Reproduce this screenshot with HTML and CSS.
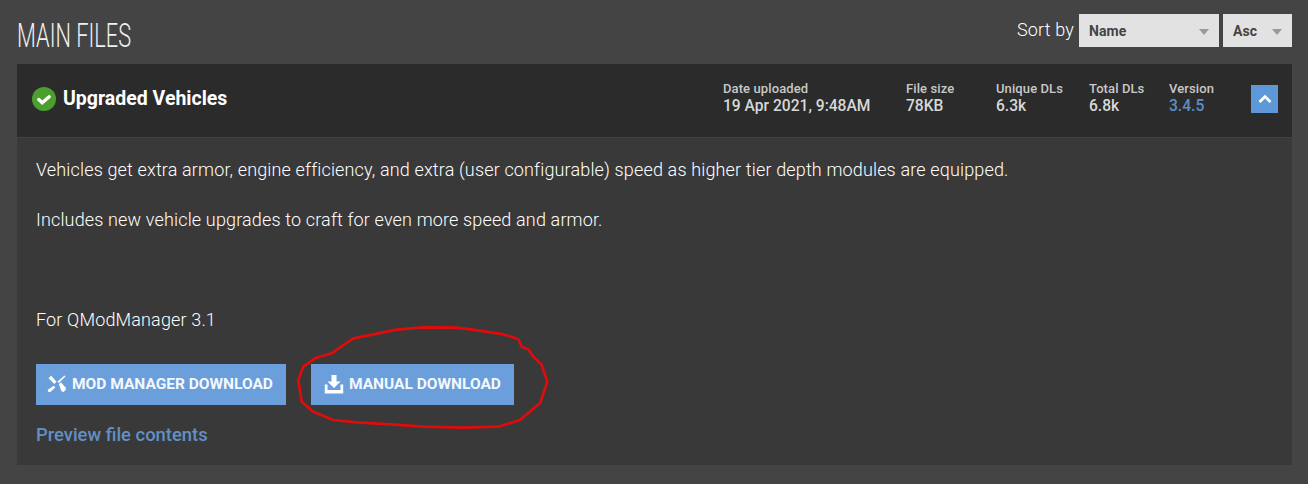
FILE: index.html
```html
<!DOCTYPE html>
<html lang="en">
<head>
    <meta charset="UTF-8">
    <meta name="viewport" content="width=device-width, initial-scale=1.0">
    <title>Main files</title>

    <link rel="stylesheet" href="styles.css">
</head>
<body>
    <div class="files_head">
        <h2 class="files_title">MAIN FILES</h2>
        <div class="sort">
            <span class="sort_label">Sort by</span>
            <div class="select select_name">Name<span class="arrow"></span></div>
            <div class="select select_order">Asc<span class="arrow"></span></div>
        </div>
    </div>

    <div class="file">
        <div class="file_header">
            <div class="file_name">
                <svg class="check" viewBox="0 0 24 24">
                    <circle cx="12" cy="12" r="12" fill="#4a9f2f"/>
                    <path d="M6.800 12.600l3.400 3.200 7-6" fill="none" stroke="#fff" stroke-width="3.400" stroke-linecap="round"/>
                </svg>
                <span>Upgraded Vehicles</span>
            </div>
            <div class="stats">
                <div class="stat stat_date"><span class="stat_label">Date uploaded</span><span class="stat_value">19 Apr 2021, 9:48AM</span></div>
                <div class="stat stat_size"><span class="stat_label">File size</span><span class="stat_value">78KB</span></div>
                <div class="stat stat_unique"><span class="stat_label">Unique DLs</span><span class="stat_value">6.3k</span></div>
                <div class="stat stat_total"><span class="stat_label">Total DLs</span><span class="stat_value">6.8k</span></div>
                <div class="stat stat_version"><span class="stat_label">Version</span><span class="stat_value version">3.4.5</span></div>
            </div>
            <div class="collapse">
                <svg viewBox="0 0 14 10" width="14" height="10">
                    <path d="M1.500 8L7 2.600 12.500 8" fill="none" stroke="#fff" stroke-width="2.800"/>
                </svg>
            </div>
        </div>

        <div class="file_body">
            <p class="desc">Vehicles get extra armor, engine efficiency, and extra (user configurable) speed as higher tier depth modules are equipped.</p>
            <p class="desc">Includes new vehicle upgrades to craft for even more speed and armor.</p>
            <p class="desc desc_last">For QModManager 3.1</p>

            <div class="actions">
                <a class="btn btn_mod">
                    <svg viewBox="0 0 20 18" width="20" height="18">
                        <path d="M1.500 3.500L4 .5l5.500 6.300-2.300 2.200-4-4.200z" fill="#fff"/>
                        <path d="M17.500 .5l1 1-6.800 6.600-1.300-1.300z" fill="#fff"/>
                        <path d="M11.800 9.300l2-2 5.200 5.700-.3 1.700-2.200 2.300-2-.8z" fill="#fff"/>
                        <path d="M6.800 10.700l1.600 1.500-5 4.800-2.400-.2-.2-2z" fill="#fff"/>
                    </svg>
                    MOD MANAGER DOWNLOAD
                </a>
                <a class="btn btn_manual">
                    <svg viewBox="0 0 20 20" width="20" height="20">
                        <path d="M7.500 1h5v6.500h4L10 14 3.500 7.500h4z" fill="#fff"/>
                        <path d="M.8 10.500h2.700v5.500h13v-5.500h2.700V19.500H.8z" fill="#fff"/>
                    </svg>
                    MANUAL DOWNLOAD
                </a>
            </div>
            <a class="preview">Preview file contents</a>

            <svg class="scribble" viewBox="0 0 840 375">
                <path d="M685 72L640 58 570 47 500 38 400 37 320 44 250 58 190 70 160 90 125 115 75 130 40 155 25 195 35 260 70 290 130 315 200 322 300 328 400 335 520 338 625 335 690 315 750 265 772 200 755 150 730 125 715 103 695 95 685 72" fill="none" stroke="#e00c0c" stroke-width="8" stroke-linejoin="round"/>
            </svg>
        </div>
    </div>
</body>
</html>
```

FILE: styles.css
```css
body
{
    margin: 0px;
    height: 484px;
    padding: 14px 16px 0 17px;
    box-sizing: border-box;
    overflow: hidden;
    background-color: #444444;
    color: #eaeaea;
    font-family: Roboto, "Liberation Sans", sans-serif;
}

.files_head
{
    display: flex;
    justify-content: space-between;
    height: 50px;
}

.files_title
{
    margin: 0px;
    font-family: Roboto, sans-serif;
    font-size: 33px;
    font-weight: 300;
    line-height: 44px;
    color: #f0f0f0;
    transform: scaleX(0.66);
    transform-origin: left center;
}

.sort
{
    display: flex;
    align-items: flex-start;
}

.sort_label
{
    margin-right: 5px;
    font-size: 18px;
    font-weight: 300;
    letter-spacing: 0.15px;
    line-height: 31px;
    color: #ffffff;
}

.select
{
    display: flex;
    align-items: center;
    justify-content: space-between;
    height: 33px;
    padding: 0px 10px 0px 10px;
    box-sizing: border-box;
    background-color: #e2e2e2;
    color: #444444;
    font-size: 14px;
    font-weight: 700;
    letter-spacing: 0.1px;
}

.select_name
{
    width: 140px;
}

.select_order
{
    width: 69px;
    margin-left: 4px;
}

.arrow
{
    width: 0px;
    height: 0px;
    margin-top: 2px;
    border-left: 5px solid transparent;
    border-right: 5px solid transparent;
    border-top: 6px solid #999999;
}

.file
{
    display: flex;
    flex-direction: column;
    height: 401px;
    background-color: #393939;
}

.file_header
{
    display: flex;
    align-items: center;
    height: 74px;
    flex-shrink: 0;
    padding-left: 15px;
    padding-bottom: 4px;
    box-sizing: border-box;
    background-color: #2b2b2b;
    border-bottom: 1px solid #424242;
}

.file_name
{
    display: flex;
    align-items: center;
    flex-grow: 1;
    font-size: 19.500px;
    font-weight: 700;
    color: #ffffff;
}

.check
{
    width: 24px;
    height: 24px;
    margin-right: 7px;
}

.stats
{
    display: flex;
}

.stat
{
    display: flex;
    flex-direction: column;
    margin-top: -1px;
}

.stat_date { width: 183px; }
.stat_size { width: 90px; }
.stat_unique { width: 93px; }
.stat_total { width: 80px; }
.stat_version { width: 82px; }

.stat_label
{
    font-size: 13px;
    font-weight: 500;
    letter-spacing: 0.1px;
    line-height: 16px;
    color: #c8c8c8;
}

.stat_value
{
    font-size: 15.600px;
    font-weight: 500;
    line-height: 18px;
    color: #d8d8d8;
}

.stat_value.version
{
    color: #5c8fc7;
}

.collapse
{
    display: flex;
    align-items: center;
    justify-content: center;
    width: 27px;
    height: 28px;
    margin-right: 14px;
    background-color: #5f98d9;
}

.file_body
{
    position: relative;
    flex-grow: 1;
    padding: 19px 19px 0px;
}

.desc
{
    margin: 0px 0px 25px;
    font-size: 18px;
    font-weight: 300;
    letter-spacing: 0.15px;
    line-height: 25px;
    color: #ffffff;
}

.desc_last
{
    margin-top: 75px;
    margin-bottom: 32px;
}

.actions
{
    display: flex;
    gap: 25px;
}

.btn
{
    display: flex;
    align-items: center;
    gap: 5px;
    height: 41px;
    padding-bottom: 1px;
    box-sizing: border-box;
    background-color: #6a9fdb;
    color: #f4f8fc;
    font-size: 15.500px;
    font-weight: 700;
    white-space: nowrap;
}

.btn_mod
{
    width: 250px;
    padding-left: 11px;
}

.btn_manual
{
    width: 203px;
    padding-left: 13px;
}

.preview
{
    display: block;
    margin-top: 17px;
    font-size: 18.400px;
    font-weight: 500;
    line-height: 25px;
    color: #6390c4;
}

.scribble
{
    position: absolute;
    left: 273px;
    top: 177px;
    width: 280px;
    height: 125px;
}
```
